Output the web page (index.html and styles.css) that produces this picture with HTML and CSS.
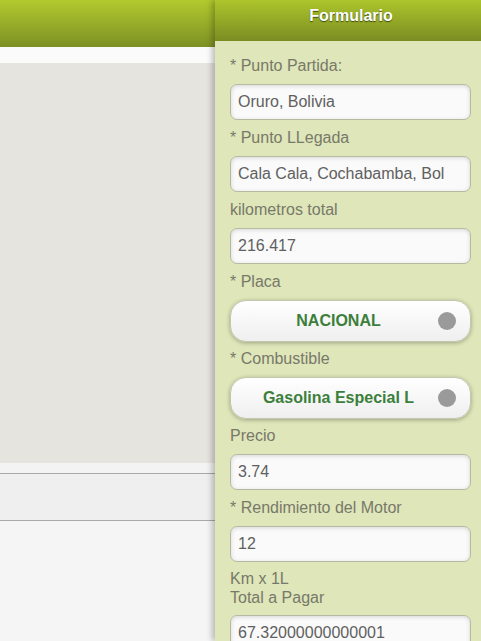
FILE: index.html
```html
<!DOCTYPE html>
<html lang="es">
<head>
    <meta charset="UTF-8">
    <title>Formulario</title>
    <link rel="stylesheet" href="styles.css">
</head>
<body>
    <div class="page">
        <div class="main">
            <div class="main-header"></div>
            <div class="main-strip"></div>
            <div class="main-map"></div>
            <div class="main-gap"></div>
            <div class="main-row"></div>
            <div class="main-rest"></div>
        </div>

        <div class="panel">
            <div class="panel-header">Formulario</div>
            <div class="panel-body">
                <label class="field-label">* Punto Partida:</label>
                <div class="field-input">Oruro, Bolivia</div>

                <label class="field-label">* Punto LLegada</label>
                <div class="field-input">Cala Cala, Cochabamba, Bol</div>

                <label class="field-label">kilometros total</label>
                <div class="field-input">216.417</div>

                <label class="field-label">* Placa</label>
                <div class="select-btn">
                    <span class="select-text">NACIONAL</span>
                    <span class="select-dot"></span>
                </div>

                <label class="field-label">* Combustible</label>
                <div class="select-btn">
                    <span class="select-text">Gasolina Especial L</span>
                    <span class="select-dot"></span>
                </div>

                <label class="field-label">Precio</label>
                <div class="field-input">3.74</div>

                <label class="field-label">* Rendimiento del Motor</label>
                <div class="field-input">12</div>

                <div class="field-note">Km x 1L</div>
                <label class="field-label tight">Total a Pagar</label>
                <div class="field-input">67.32000000000001</div>
            </div>
        </div>
    </div>
</body>
</html>
```

FILE: styles.css
```css
body {
    margin: 0;
    font-family: 'Liberation Sans', Arial, sans-serif;
    overflow: hidden;
    background: #f5f5f5;
}
.page {
    display: flex;
    height: 641px;
}
.main {
    width: 215px;
    display: flex;
    flex-direction: column;
}
.main-header {
    height: 47px;
    background: linear-gradient(to bottom, #b3ca2e, #7c9024);
}
.main-strip {
    height: 16px;
    background: #fbfbfb;
}
.main-map {
    height: 400px;
    background: #e5e4df;
}
.main-gap {
    height: 10px;
    background: #f3f3f3;
}
.main-row {
    height: 46px;
    background: #efefef;
    border-top: 1px solid #a9a9a9;
    border-bottom: 1px solid #a9a9a9;
}
.main-rest {
    flex: 1;
    background: #f5f5f5;
}
.panel {
    width: 266px;
    background: #dfe6b9;
    box-shadow: -3px 0 6px rgba(0,0,0,0.25);
    overflow: hidden;
}
.panel-header {
    height: 41px;
    line-height: 32px;
    padding-left: 6px;
    text-align: center;
    font-size: 16px;
    font-weight: bold;
    color: #fff;
    text-shadow: 0 1px 1px #3d4a10;
    background: linear-gradient(to bottom, #adc52c, #7b8c22);
}
.panel-body {
    padding: 15px 10px 0 15px;
}
.field-label {
    display: block;
    font-size: 16px;
    line-height: 20px;
    color: #77796a;
    margin-bottom: 8px;
}
.field-label.tight {
    line-height: 19px;
}
.field-note {
    font-size: 16px;
    line-height: 19px;
    color: #77796a;
    margin-top: -1px;
}
.field-input {
    height: 34px;
    line-height: 34px;
    padding: 0 7px;
    margin-bottom: 8px;
    font-size: 16px;
    color: #606060;
    background: #fafafa;
    border: 1px solid #b7b9a2;
    border-radius: 7px;
    box-shadow: inset 0 1px 4px rgba(0,0,0,0.15);
    white-space: nowrap;
    overflow: hidden;
}
.select-btn {
    position: relative;
    height: 40px;
    margin-bottom: 7px;
    display: flex;
    align-items: center;
    justify-content: center;
    padding-right: 24px;
    background: linear-gradient(to bottom, #ffffff, #efefef);
    border: 1px solid #c4c6ad;
    border-radius: 16px;
    box-shadow: 0 1px 4px rgba(0,0,0,0.3);
}
.select-text {
    font-size: 16px;
    font-weight: bold;
    color: #3b7f3b;
}
.select-dot {
    position: absolute;
    right: 14px;
    top: 11px;
    width: 18px;
    height: 18px;
    border-radius: 50%;
    background: #9a9a9a;
}
```
